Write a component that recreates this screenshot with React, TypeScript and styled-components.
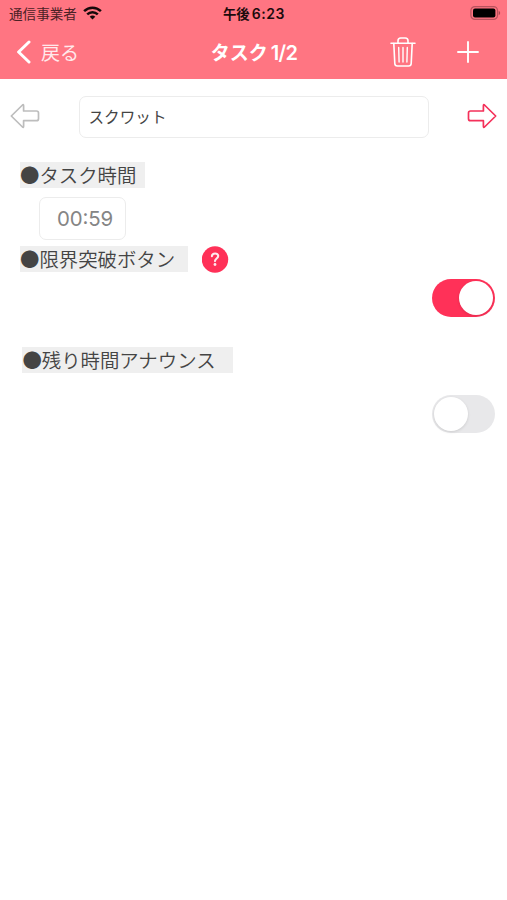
import React, { useState } from 'react';
import styled, { createGlobalStyle } from 'styled-components';

const GlobalStyle = createGlobalStyle`
  * { box-sizing: border-box; }
  body {
    margin: 0;
    background: #fff;
    font-family: Inter, "Noto Sans CJK JP", sans-serif;
  }
  button {
    padding: 0;
    border: 0;
    background: none;
    font: inherit;
    color: inherit;
  }
  svg { display: block; }
`;

const Screen = styled.main`
  width: 507px;
  height: 900px;
  overflow: hidden;
  background: #fff;
`;

const Header = styled.header`
  height: 79px;
  background: #ff7582;
`;

const StatusBar = styled.div`
  display: grid;
  grid-template-columns: 1fr auto 1fr;
  align-items: center;
  height: 27px;
  padding: 0 6px 0 9px;
  color: #1c0b0d;
`;

const Carrier = styled.div`
  display: flex;
  align-items: center;
  gap: 6px;
  font-size: 13.6px;
  line-height: 20px;
  white-space: nowrap;
  color: #4a2125;
`;

const CarrierIcon = styled.span`
  padding-bottom: 2px;
`;

const Clock = styled.div`
  display: flex;
  gap: 2px;
  margin-left: -2px;
  font-size: 13.4px;
  line-height: 20px;
  font-weight: 700;
`;

const Digits = styled.span`
  font-weight: 600;
  font-size: 14px;
  letter-spacing: 0.6px;
`;

const Battery = styled.div`
  justify-self: end;
  padding-bottom: 1px;
`;

const NavBar = styled.nav`
  display: grid;
  grid-template-columns: 1fr auto 1fr;
  align-items: center;
  height: 50px;
  padding: 0 28px 0 16px;
  color: #fff;
`;

const BackButton = styled.button`
  display: flex;
  align-items: center;
  gap: 9px;
  font-size: 19px;
  line-height: 28px;
  color: #ffe9eb;
`;

const BackText = styled.span`
  padding-top: 3px;
`;

const Title = styled.h1`
  display: flex;
  align-items: center;
  gap: 3px;
  margin: 0;
  padding-left: 13px;
  font-size: 19px;
  line-height: 28px;
  font-weight: 700;
`;

const TitleWord = styled.span`
  padding-top: 3px;
`;

const TitleCount = styled.span`
  padding-top: 1px;
  font-weight: 600;
  font-size: 20px;
  letter-spacing: -0.7px;
`;

const Actions = styled.div`
  display: flex;
  justify-content: flex-end;
  align-items: center;
  gap: 41px;
`;

const NameRow = styled.div`
  display: flex;
  align-items: center;
  justify-content: space-between;
  padding: 17px 10px 0;
`;

const ArrowButton = styled.button`
  padding-bottom: 3px;
`;

const NameField = styled.div`
  display: flex;
  align-items: center;
  width: 350px;
  height: 42px;
  padding: 0 9px 2px;
  border: 1px solid #ececec;
  border-radius: 7px;
  font-size: 15.6px;
  color: #444;
`;

const Section = styled.section<{ $top: number; $left?: number }>`
  padding: ${(p) => p.$top}px 12px 0 ${(p) => p.$left ?? 20}px;
`;

const Heading = styled.div`
  display: flex;
  align-items: center;
  gap: 14px;
  height: 26px;
`;

const Label = styled.h2<{ $width: number }>`
  width: ${(p) => p.$width}px;
  height: 26px;
  margin: 0;
  background: #efefef;
  font-family: "Noto Sans CJK JP", sans-serif;
  font-size: 19.4px;
  line-height: 26px;
  font-weight: 350;
  white-space: nowrap;
  color: #444;
`;

const TimeField = styled.div`
  display: flex;
  align-items: center;
  justify-content: center;
  width: 87px;
  height: 43px;
  margin: 9px 0 0 19px;
  padding-left: 5px;
  border: 1px solid #ececec;
  border-radius: 7px;
  font-size: 20.4px;
  letter-spacing: -0.1px;
  font-feature-settings: "case";
  color: #858585;
`;

const SwitchRow = styled.div<{ $top: number }>`
  display: flex;
  justify-content: flex-end;
  padding-top: ${(p) => p.$top}px;
`;

const Track = styled.button<{ $on: boolean }>`
  display: flex;
  justify-content: ${(p) => (p.$on ? 'flex-end' : 'flex-start')};
  align-items: center;
  width: 63px;
  height: 38px;
  padding: 0 2px;
  border-radius: 19px;
  background: ${(p) => (p.$on ? '#ff3158' : '#e8e8ea')};
`;

const Thumb = styled.span`
  width: 34px;
  height: 34px;
  border-radius: 50%;
  background: #fff;
  box-shadow: 0 1px 3px rgba(0, 0, 0, 0.12);
`;

const WifiIcon = () => (
  <svg width="19" height="14" viewBox="0 0 19 14" fill="none" stroke="#16090a" strokeWidth="2.5">
    <path d="M1.1 5.2C5.9.5 13.1.5 17.9 5.2" />
    <path d="M4.2 8.4c3-2.9 7.6-2.9 10.6 0" />
    <path d="M9.5 13.5 6.7 10.7c1.6-1.5 4-1.5 5.6 0z" fill="#16090a" stroke="none" />
  </svg>
);

const BatteryIcon = () => (
  <svg width="31" height="14" viewBox="0 0 31 14">
    <rect x="0.9" y="0.6" width="26.6" height="12.8" rx="4" fill="none" stroke="#b8525d" strokeWidth="1.2" />
    <rect x="3" y="2.6" width="22.4" height="8.8" rx="2" fill="#000" />
    <path d="M28.7 4.8c2 .9 2 3.5 0 4.4z" fill="#a84852" />
  </svg>
);

const ChevronIcon = () => (
  <svg width="16" height="24" viewBox="0 0 16 24" fill="none" stroke="#fff" strokeWidth="3" strokeLinecap="round" strokeLinejoin="round">
    <path d="M13 2 2.6 12 13 22" />
  </svg>
);

const TrashIcon = () => (
  <svg width="26" height="31" viewBox="0 0 26 31" fill="none" stroke="#fff" strokeWidth="1.6" strokeLinecap="round" strokeLinejoin="round">
    <path d="M1 6.3h24M8 6V3.7C8 1.9 9 1 10.7 1h4.6C17 1 18 1.9 18 3.7V6" />
    <path d="m3.8 6.5 1 20c.1 1.6 1 2.500 2.600 2.500h11.200c1.600 0 2.500-.9 2.600-2.500l1-20" />
    <path d="m8.700 10.500.4 14.500M13 10.500V25M17.300 10.500l-.4 14.500" strokeWidth="1.4" />
  </svg>
);

const PlusIcon = () => (
  <svg width="22" height="22" viewBox="0 0 22 22" stroke="#fff" strokeWidth="1.9" strokeLinecap="round">
    <path d="M11 1v20M1 11h20" />
  </svg>
);

const ArrowIcon = ({ color, flipped = false }: { color: string; flipped?: boolean }) => (
  <svg width="30" height="26" viewBox="0 0 30 26" fill="none" stroke={color} strokeWidth="1.7" strokeLinejoin="round">
    <path
      transform={flipped ? 'translate(30 0) scale(-1 1)' : undefined}
      d="M1.300 13 12.500 2Q13.600 1.200 13.600 2.800V8H26.500Q28.500 8 28.500 10V15.700Q28.500 17.700 26.500 17.700H13.600V23.200Q13.600 24.800 12.500 24Z"
    />
  </svg>
);

const HelpIcon = () => (
  <svg width="27" height="27" viewBox="0 0 27 27" fill="none">
    <circle cx="13" cy="13.5" r="13.2" fill="#ff3158" />
    <path d="M9.900 10.200C10.100 6.500 16.200 6.600 16.200 10c0 2.400-3.200 2.600-3.200 5.100" stroke="#ffe9ed" strokeWidth="2.1" strokeLinecap="round" />
    <circle cx="13" cy="18.500" r="1.400" fill="#ffe9ed" />
  </svg>
);

function Switch({ initial, label }: { initial: boolean; label: string }) {
  const [on, setOn] = useState(initial);
  return (
    <Track type="button" role="switch" aria-checked={on} aria-label={label} $on={on} onClick={() => setOn(!on)}>
      <Thumb />
    </Track>
  );
}

export default function App() {
  return (
    <Screen>
      <GlobalStyle />
      <Header>
        <StatusBar>
          <Carrier>通信事業者<CarrierIcon><WifiIcon /></CarrierIcon></Carrier>
          <Clock>午後<Digits>6:23</Digits></Clock>
          <Battery><BatteryIcon /></Battery>
        </StatusBar>
        <NavBar>
          <BackButton type="button"><ChevronIcon /><BackText>戻る</BackText></BackButton>
          <Title><TitleWord>タスク</TitleWord><TitleCount>1/2</TitleCount></Title>
          <Actions>
            <button type="button" aria-label="削除"><TrashIcon /></button>
            <button type="button" aria-label="追加"><PlusIcon /></button>
          </Actions>
        </NavBar>
      </Header>
      <NameRow>
        <ArrowButton type="button" aria-label="前のタスク"><ArrowIcon color="#bdbdbd" /></ArrowButton>
        <NameField>スクワット</NameField>
        <ArrowButton type="button" aria-label="次のタスク"><ArrowIcon color="#f4315a" flipped /></ArrowButton>
      </NameRow>
      <Section $top={24}>
        <Heading><Label $width={125}>●タスク時間</Label></Heading>
        <TimeField>00:59</TimeField>
      </Section>
      <Section $top={6}>
        <Heading>
          <Label $width={168}>●限界突破ボタン</Label>
          <HelpIcon />
        </Heading>
        <SwitchRow $top={7}><Switch initial label="限界突破ボタン" /></SwitchRow>
      </Section>
      <Section $top={30} $left={22.4}>
        <Heading><Label $width={211}>●残り時間アナウンス</Label></Heading>
        <SwitchRow $top={22}><Switch initial={false} label="残り時間アナウンス" /></SwitchRow>
      </Section>
    </Screen>
  );
}
